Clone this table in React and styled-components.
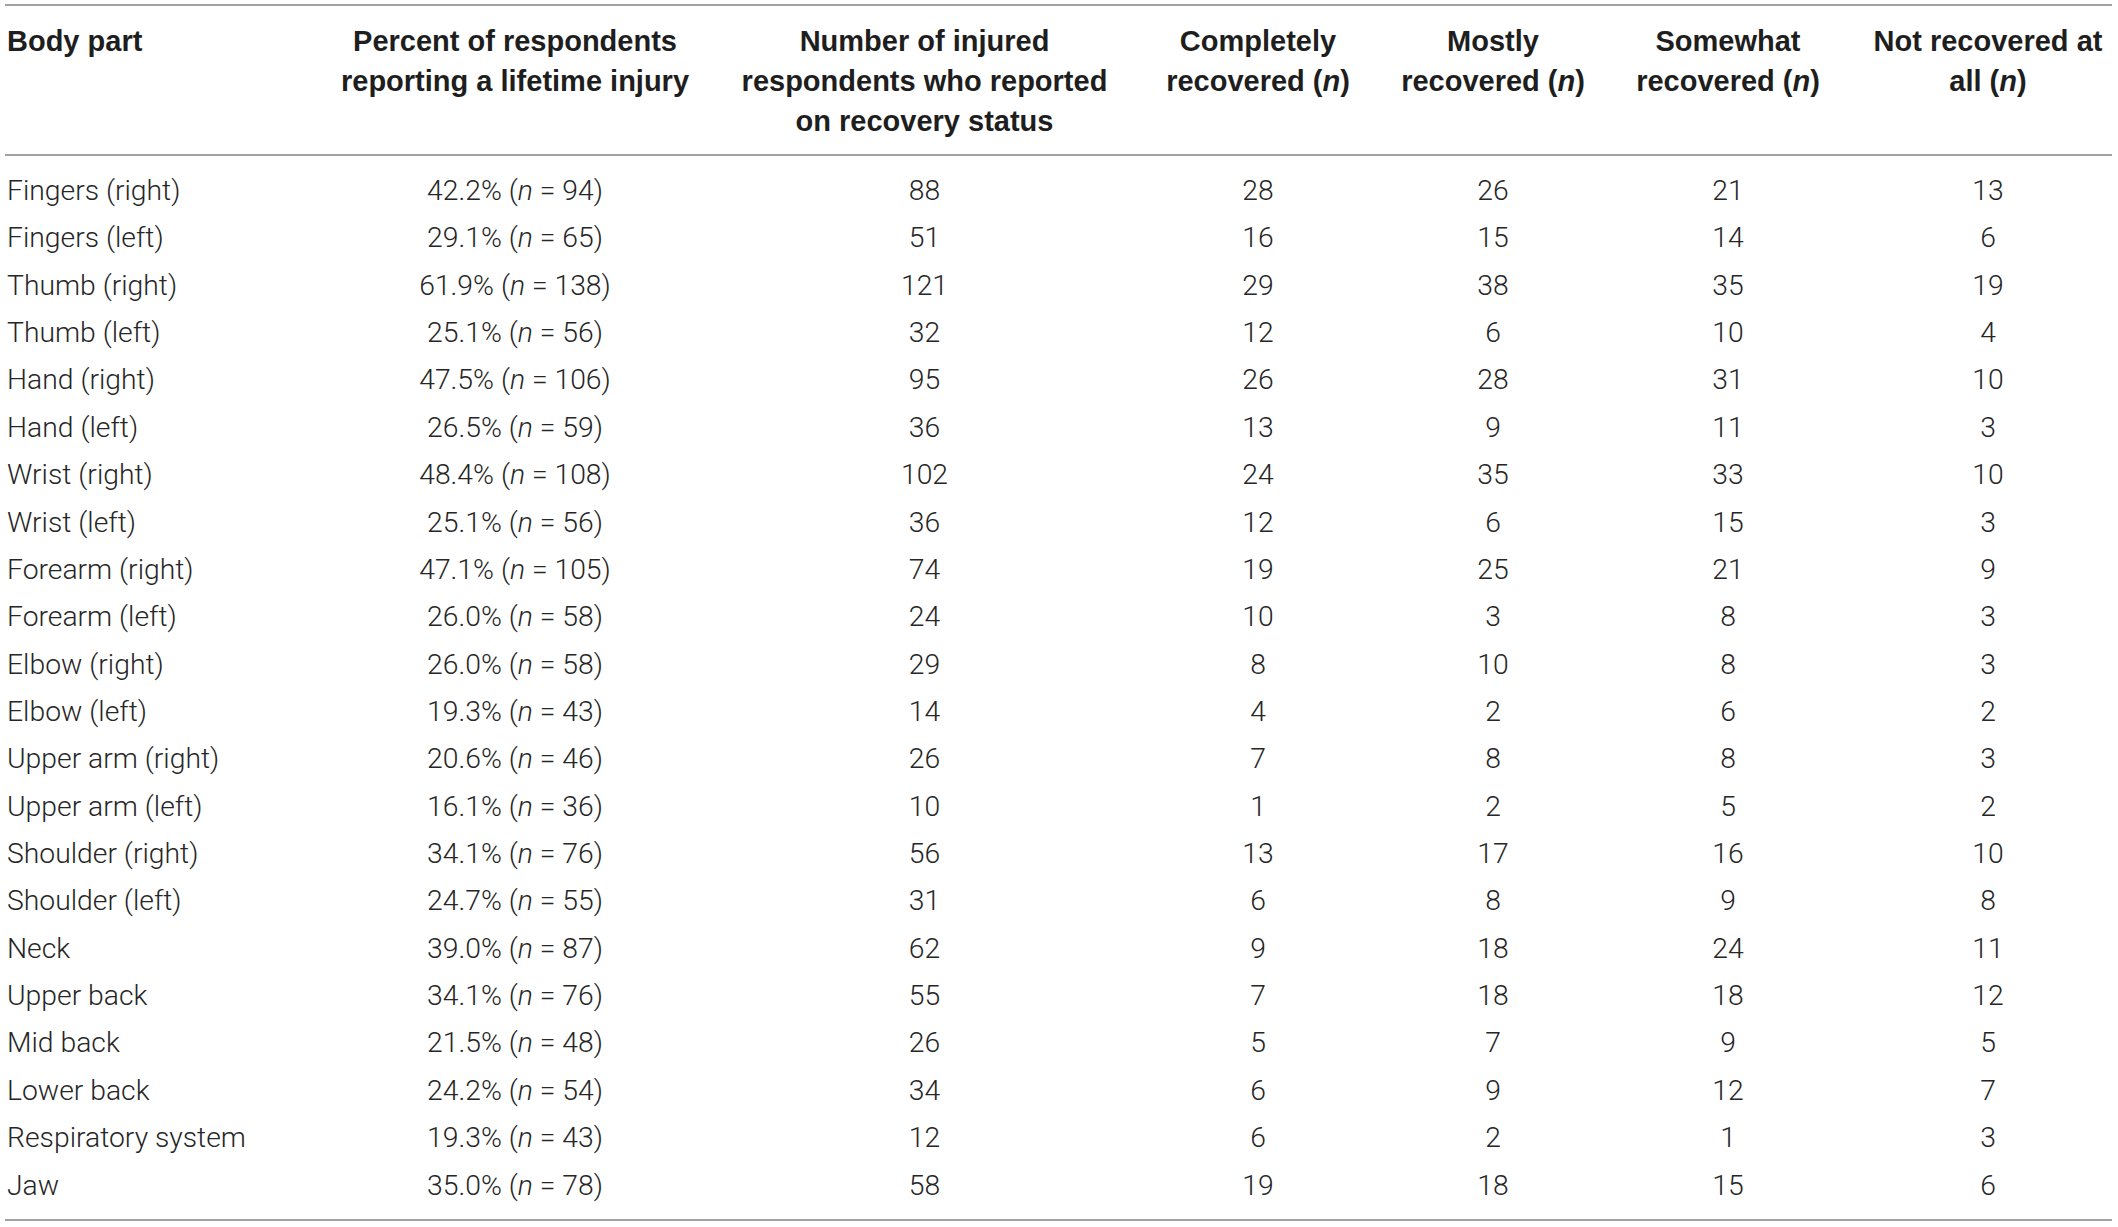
import React from "react";
import styled, { createGlobalStyle } from "styled-components";

const rows = [
  ["Fingers (right)", "42.2%", 94, 88, 28, 26, 21, 13],
  ["Fingers (left)", "29.1%", 65, 51, 16, 15, 14, 6],
  ["Thumb (right)", "61.9%", 138, 121, 29, 38, 35, 19],
  ["Thumb (left)", "25.1%", 56, 32, 12, 6, 10, 4],
  ["Hand (right)", "47.5%", 106, 95, 26, 28, 31, 10],
  ["Hand (left)", "26.5%", 59, 36, 13, 9, 11, 3],
  ["Wrist (right)", "48.4%", 108, 102, 24, 35, 33, 10],
  ["Wrist (left)", "25.1%", 56, 36, 12, 6, 15, 3],
  ["Forearm (right)", "47.1%", 105, 74, 19, 25, 21, 9],
  ["Forearm (left)", "26.0%", 58, 24, 10, 3, 8, 3],
  ["Elbow (right)", "26.0%", 58, 29, 8, 10, 8, 3],
  ["Elbow (left)", "19.3%", 43, 14, 4, 2, 6, 2],
  ["Upper arm (right)", "20.6%", 46, 26, 7, 8, 8, 3],
  ["Upper arm (left)", "16.1%", 36, 10, 1, 2, 5, 2],
  ["Shoulder (right)", "34.1%", 76, 56, 13, 17, 16, 10],
  ["Shoulder (left)", "24.7%", 55, 31, 6, 8, 9, 8],
  ["Neck", "39.0%", 87, 62, 9, 18, 24, 11],
  ["Upper back", "34.1%", 76, 55, 7, 18, 18, 12],
  ["Mid back", "21.5%", 48, 26, 5, 7, 9, 5],
  ["Lower back", "24.2%", 54, 34, 6, 9, 12, 7],
  ["Respiratory system", "19.3%", 43, 12, 6, 2, 1, 3],
  ["Jaw", "35.0%", 78, 58, 19, 18, 15, 6],
];

// column widths chosen so each column's centre lines up with the source table
const widths = [298, 424, 395, 272, 198, 272, 248];

const GlobalStyle = createGlobalStyle`
  html, body {
    margin: 0;
    background: #fff;
  }
`;

const Page = styled.div`
  padding: 4px 6px 0 5px;
  background: #fff;
`;

const Table = styled.table`
  width: 2107px;
  table-layout: fixed;
  border-collapse: separate;
  border-spacing: 0;
  color: #2a2a2a;
`;

const Col = styled.col`
  width: ${(p) => p.$w}px;
`;

const HeadCell = styled.th`
  font-family: "Liberation Sans", Arial, sans-serif;
  font-weight: 700;
  font-size: 29px;
  line-height: 40px;
  color: #1e1e1e;
  text-align: ${(p) => p.$align || "center"};
  vertical-align: top;
  padding: 14.5px ${(p) => (p.$align === "left" ? "2px" : "0")} 13.5px;
  border-top: 2px solid #a2a2a2;
  border-bottom: 2px solid #a2a2a2;
  white-space: nowrap;
`;

const Row = styled.tr`
  &:first-child td {
    padding-top: 11px;
  }
  &:last-child td {
    padding-bottom: 10.5px;
    border-bottom: 2px solid #a2a2a2;
  }
`;

const Cell = styled.td`
  font-family: Roboto, "Liberation Sans", sans-serif;
  font-weight: 300;
  font-size: 28.3px;
  line-height: 47.36px;
  color: #262626;
  text-align: ${(p) => p.$align || "center"};
  vertical-align: top;
  padding: 0 ${(p) => (p.$align === "left" ? "2px" : "0")};
  white-space: nowrap;
`;

const Em = styled.i`
  font-style: italic;
`;

const N = () => <Em>n</Em>;

export default function App() {
  return (
    <Page>
      <GlobalStyle />
      <Table>
        <colgroup>
          {widths.map((w, i) => (
            <Col key={i} $w={w} />
          ))}
        </colgroup>
        <thead>
          <tr>
            <HeadCell $align="left">Body part</HeadCell>
            <HeadCell>
              Percent of respondents
              <br />
              reporting a lifetime injury
            </HeadCell>
            <HeadCell>
              Number of injured
              <br />
              respondents who reported
              <br />
              on recovery status
            </HeadCell>
            <HeadCell>
              Completely
              <br />
              recovered (<N />)
            </HeadCell>
            <HeadCell>
              Mostly
              <br />
              recovered (<N />)
            </HeadCell>
            <HeadCell>
              Somewhat
              <br />
              recovered (<N />)
            </HeadCell>
            <HeadCell>
              Not recovered at
              <br />
              all (<N />)
            </HeadCell>
          </tr>
        </thead>
        <tbody>
          {rows.map(([part, pct, n, reported, full, mostly, some, none]) => (
            <Row key={part}>
              <Cell $align="left">{part}</Cell>
              <Cell>
                {pct} (<N /> = {n})
              </Cell>
              <Cell>{reported}</Cell>
              <Cell>{full}</Cell>
              <Cell>{mostly}</Cell>
              <Cell>{some}</Cell>
              <Cell>{none}</Cell>
            </Row>
          ))}
        </tbody>
      </Table>
    </Page>
  );
}
